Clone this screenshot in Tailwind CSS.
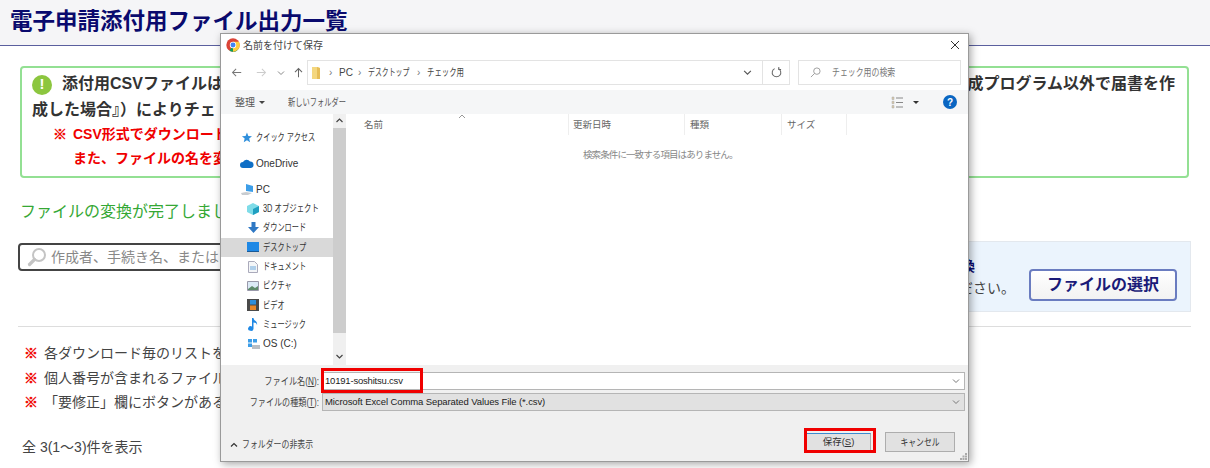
<!DOCTYPE html>
<html lang="ja">
<head>
<meta charset="UTF-8">
<title>電子申請添付用ファイル出力一覧</title>
<script src="https://cdn.jsdelivr.net/npm/@tailwindcss/browser@4"></script>
</head>
<body class="bg-white font-['Liberation_Sans','Noto_Sans_CJK_JP',sans-serif] text-[#333]">
<div class="relative h-[468px] w-[1210px] overflow-hidden">

  <!-- page behind the dialog -->
  <header class="h-[46px] border-b border-[#5a5f9e] bg-[#f5f5f7] pl-[10px] pt-[5px]">
    <h1 class="text-[22.5px] font-bold leading-[34px] text-[#0a0a6e]">電子申請添付用ファイル出力一覧</h1>
  </header>

  <main class="pl-[18px] pr-[19px]">
    <section class="mt-[20px] ml-[2px] mr-[2px] h-[112px] rounded-[4px] border-2 border-[#93e093] pl-[10px] pr-[12px] pt-[2px]">
      <div class="flex h-[27px] items-center justify-between text-[16px] font-bold">
        <div class="flex items-center">
          <span class="flex size-[20px] translate-y-[1px] items-center justify-center rounded-full bg-[#8cc63f] text-[15px] font-bold text-white">!</span>
          <span class="ml-[10px]">添付用CSVファイルは</span>
        </div>
        <span>成プログラム以外で届書を作</span>
      </div>
      <p class="h-[25px] text-[16px] font-bold leading-[25px]">成した場合』）によりチェ</p>
      <p class="ml-[21px] flex h-[24px] items-center text-[14px] font-bold text-[#f00000]"><span class="w-[20px] [-webkit-text-stroke:0.5px_#f00000]">※</span>CSV形式でダウンロード</p>
      <p class="ml-[41px] flex h-[25px] items-center text-[14px] font-bold text-[#f00000]">また、ファイルの名を変</p>
    </section>

    <p class="mt-[22px] ml-[2px] text-[16px] leading-[24px] text-[#35a835]">ファイルの変換が完了しました</p>

    <div class="mt-[19px] flex items-start justify-between">
      <div class="flex h-[28px] w-[400px] items-center rounded-[4px] border-2 border-[#444] pl-[7px]">
        <svg class="size-[20px]" viewBox="0 0 20 20" fill="none"><circle cx="12" cy="8" r="6" stroke="#c4c4c4" stroke-width="2"/><path d="M7.5 12.5 2.5 17.5" stroke="#c4c4c4" stroke-width="3.2" stroke-linecap="round"/></svg>
        <span class="ml-[4px] text-[14px] text-[#888]">作成者、手続き名、または</span>
      </div>
      <div class="flex h-[71px] w-[500px] -translate-y-[2px] items-center justify-end border border-[#e3e8ee] bg-[#ebf4fd] pr-[13px]">
        <div class="mr-[14px]">
          <p class="mb-[2px] mr-[40px] text-right text-[14px] font-bold leading-[20px] text-[#0a0a6e]">換</p>
          <p class="text-[14px] leading-[20px] text-[#444]">ください。</p>
        </div>
        <button class="mt-[16px] h-[32px] w-[148px] rounded-[4px] border-2 border-[#6a7cc0] bg-gradient-to-b from-white to-[#f2f2f2] text-[16px] font-bold text-[#1a1a78]">ファイルの選択</button>
      </div>
    </div>

    <hr class="mt-[12px] border-[#dddddd]">

    <ul class="mt-[14px] ml-[6px] text-[14px] leading-[24.5px] text-[#444]">
      <li class="flex"><span class="w-[20px] font-bold text-[#f00000] [-webkit-text-stroke:0.5px_#f00000]">※</span>各ダウンロード毎のリストを</li>
      <li class="flex"><span class="w-[20px] font-bold text-[#f00000] [-webkit-text-stroke:0.5px_#f00000]">※</span>個人番号が含まれるファイル</li>
      <li class="flex"><span class="w-[20px] font-bold text-[#f00000] [-webkit-text-stroke:0.5px_#f00000]">※</span>「要修正」欄にボタンがある</li>
    </ul>
    <p class="mt-[22px] ml-[4px] text-[14px] text-[#444]">全 3(1〜3)件を表示</p>
  </main>

  <!-- save dialog -->
  <div class="absolute left-[220px] top-[33px] flex h-[429px] w-[749px] flex-col border border-[#9a9a9a] bg-white text-[#333] shadow-[2px_2px_8px_rgba(0,0,0,0.35)]">
    <div class="flex h-[22px] shrink-0 items-center justify-between pl-[5px] pr-[6px]">
      <div class="flex items-center">
        <svg class="size-[14px]" viewBox="0 0 48 48"><circle cx="24" cy="24" r="23" fill="#db4437"/><path d="M24 24 44 36A23 23 0 0 1 12 44Z" fill="#0f9d58"/><path d="M24 13H44.5A23 23 0 0 1 24 47Z" fill="#ffcd40"/><circle cx="24" cy="24" r="11" fill="#fff"/><circle cx="24" cy="24" r="8.5" fill="#4285f4"/></svg>
        <span class="ml-[3px] text-[10px] text-[#444]">名前を付けて保存</span>
      </div>
      <svg class="mr-[2px] size-[10px]" viewBox="0 0 10 10" stroke="#333" stroke-width="1"><path d="M1 1 9 9M9 1 1 9"/></svg>
    </div>

    <div class="mt-[4px] flex h-[25px] shrink-0 items-center">
      <div class="flex w-[86px] items-center pl-[10px]">
        <svg class="size-[11px]" viewBox="0 0 14 14" fill="none" stroke="#777" stroke-width="1.3"><path d="M13 7H2M6.500 2.500 2 7l4.500 4.500"/></svg>
        <svg class="ml-[14px] size-[11px]" viewBox="0 0 14 14" fill="none" stroke="#ccc" stroke-width="1.3"><path d="M1 7h11M7.500 2.500 12 7l-4.500 4.500"/></svg>
        <svg class="ml-[10px] size-[8px]" viewBox="0 0 8 8" fill="none" stroke="#888"><path d="M1 2.500 4 5.500l3-3"/></svg>
        <svg class="ml-[8px] size-[11px]" viewBox="0 0 14 14" fill="none" stroke="#666" stroke-width="1.3"><path d="M7 13V2M2.500 6.500 7 2l4.500 4.500"/></svg>
      </div>
      <div class="flex h-[25px] w-[483px] items-center border border-[#e3e3e3] text-[10px] text-[#444]">
        <svg class="ml-[4px] h-[12px] w-[8px]" viewBox="0 0 8 12"><path d="M0 0H5L8 1V12H0Z" fill="#f4d77f"/><path d="M5 0 8 1V12H5Z" fill="#e6bd57"/></svg>
        <span class="ml-[9px] w-[3px] text-[#777]">›</span><span class="ml-[7px] w-[12px]">PC</span>
        <span class="ml-[7px] w-[3px] text-[#777]">›</span><span class="ml-[7px] w-[41px] origin-left scale-x-[.69] whitespace-nowrap">デスクトップ</span>
        <span class="ml-[8px] w-[3px] text-[#777]">›</span><span class="ml-[7px] w-[37px] origin-left scale-x-[.74] whitespace-nowrap">チェック用</span>
        <svg class="ml-auto mr-[10px] size-[9px]" viewBox="0 0 8 8" fill="none" stroke="#555"><path d="M1 2.500 4 5.500l3-3"/></svg>
        <div class="flex h-full w-[27px] items-center justify-center border-l border-[#e3e3e3]">
          <svg class="size-[11px]" viewBox="0 0 12 12" fill="none" stroke="#666" stroke-width="1.100"><path d="M8 1.800A4.700 4.700 0 1 1 4 1.800"/><path d="M8.500 0v2.600H11"/></svg>
        </div>
      </div>
      <div class="ml-[8px] flex h-[25px] w-[163px] items-center border border-[#e3e3e3] pl-[11px] text-[10px] text-[#777]">
        <svg class="size-[11px]" viewBox="0 0 12 12" fill="none" stroke="#999"><circle cx="7.500" cy="4.500" r="3.500"/><path d="M5 7 1 11"/></svg>
        <span class="ml-[11px] w-[63px] origin-left scale-x-[.79] whitespace-nowrap">チェック用の検索</span>
      </div>
    </div>

    <div class="mt-[5px] flex h-[24px] shrink-0 items-center bg-[#f5f6f7] pl-[14px] pr-[11px] text-[10px] text-[#555]">
      <span>整理</span>
      <span class="ml-[4px] border-x-[3px] border-t-[3px] border-x-transparent border-t-[#444]"></span>
      <span class="ml-[23px] w-[58px] origin-left scale-x-[.725] whitespace-nowrap">新しいフォルダー</span>
      <svg class="ml-auto size-[13px]" viewBox="0 0 13 13" stroke="#888"><path d="M5 2h7M5 6.500h7M5 11h7"/><path d="M1 1h2v2.500H1zM1 5.200h2v2.500H1zM1 9.500h2V12H1z" fill="#d9c9a8" stroke="#aaa" stroke-width=".5"/></svg>
      <span class="ml-[9px] border-x-[3px] border-t-[3px] border-x-transparent border-t-[#333]"></span>
      <span class="ml-[24px] flex size-[14px] items-center justify-center rounded-full bg-[#0a66c2] text-[10px] font-bold text-white">?</span>
    </div>

    <div class="flex h-[251px] shrink-0">
      <nav class="w-[112px] shrink-0 text-[10px] text-[#333]">
        <div class="mt-[14px] flex h-[19px] items-center pl-[20px]">
          <svg class="size-[11px]" viewBox="0 0 12 12"><path d="M6.500 .5 8 4.300l4 .2-3.100 2.600 1 4L6.500 9 3 11.100l1-4L1 4.500l4-.2Z" fill="#2f8fdc"/></svg>
          <span class="ml-[4px] w-[60px] origin-left scale-x-[.72] whitespace-nowrap">クイック アクセス</span>
        </div>
        <div class="mt-[7px] flex h-[19px] items-center pl-[19px]">
          <svg class="h-[9px] w-[14px]" viewBox="0 0 14 9"><path d="M3 9A3 3 0 0 1 3 3 4 4 0 0 1 10 2.500 3.300 3.300 0 0 1 11 9Z" fill="#0f6fc6"/></svg>
          <span class="ml-[2px]">OneDrive</span>
        </div>
        <div class="mt-[7px] flex h-[19px] items-center pl-[20px]">
          <svg class="size-[13px]" viewBox="0 0 13 13"><path d="M5 1 12 3V9L5 8Z" fill="#3d9ee8"/><path d="M0 10 5 9 11 10 7 12H1Z" fill="#c8ccd0"/></svg>
          <span class="ml-[2px]">PC</span>
        </div>
        <div class="flex h-[19.300px] items-center pl-[26px]">
          <svg class="size-[12px]" viewBox="0 0 12 12"><path d="M6 0 12 3V9L6 12 0 9V3Z" fill="#7fdce8"/><path d="M6 6 12 3V9L6 12Z" fill="#1f9fc0"/></svg>
          <span class="ml-[4px] w-[57px] origin-left scale-x-[.74] whitespace-nowrap">3D オブジェクト</span>
        </div>
        <div class="flex h-[19.300px] items-center pl-[27px]">
          <svg class="size-[11px]" viewBox="0 0 11 11"><path d="M3.500 0H7.500V5H11L5.500 11 0 5H3.500Z" fill="#2f78c4"/></svg>
          <span class="ml-[4px] w-[43px] origin-left scale-x-[.72] whitespace-nowrap">ダウンロード</span>
        </div>
        <div class="flex h-[19.300px] items-center bg-[#d9d9d9] pl-[26px]">
          <svg class="h-[10px] w-[12px]" viewBox="0 0 12 10"><path d="M0 0H12V9H0Z" fill="#1e88e5"/><path d="M0 9H12V10H0Z" fill="#1a5a96"/></svg>
          <span class="ml-[4px] w-[43px] origin-left scale-x-[.72] whitespace-nowrap">デスクトップ</span>
        </div>
        <div class="flex h-[19.300px] items-center pl-[27px]">
          <svg class="h-[12px] w-[10px]" viewBox="0 0 10 12"><path d="M.5.5H6.500L9.500 3.500V11.500H.5Z" fill="#f4f6f8" stroke="#aab"/><path d="M2 6H8M2 8H8" stroke="#6aa8dc"/></svg>
          <span class="ml-[5px] w-[43px] origin-left scale-x-[.72] whitespace-nowrap">ドキュメント</span>
        </div>
        <div class="flex h-[19.300px] items-center pl-[26px]">
          <svg class="h-[10px] w-[12px]" viewBox="0 0 12 10"><path d="M.5.5H11.500V9.500H.5Z" fill="#dbeaf6" stroke="#99a"/><path d="M1 8 5 5 8 7 11 5V9H1Z" fill="#5d8a6a"/></svg>
          <span class="ml-[4px] w-[29px] origin-left scale-x-[.72] whitespace-nowrap">ピクチャ</span>
        </div>
        <div class="flex h-[19.300px] items-center pl-[26px]">
          <svg class="h-[12px] w-[12px]" viewBox="0 0 12 12"><path d="M0 0H12V12H0Z" fill="#4a4a4a"/><path d="M3 1H9V5.500H3Z" fill="#2f8fdc"/><path d="M3 6.500H9V11H3Z" fill="#e8882a"/></svg>
          <span class="ml-[4px] w-[22px] origin-left scale-x-[.72] whitespace-nowrap">ビデオ</span>
        </div>
        <div class="flex h-[19.300px] items-center pl-[27px]">
          <svg class="h-[13px] w-[10px]" viewBox="0 0 10 13"><path d="M4 0H5.500C5.500 3 10 3 9 7 8.500 5 7 4.500 5.500 4.500V10.500A2.700 2.300 0 1 1 4 8.500Z" fill="#1e88e5"/></svg>
          <span class="ml-[5px] w-[43px] origin-left scale-x-[.72] whitespace-nowrap">ミュージック</span>
        </div>
        <div class="flex h-[19.300px] items-center pl-[26px]">
          <svg class="size-[13px]" viewBox="0 0 13 13"><path d="M1 2H5V5.500H1ZM6 2H10V5.500H6ZM1 6.500H5V10H1Z" fill="#3d9ee8"/><path d="M5 8H13V12H5Z" fill="#b9bec4"/></svg>
          <span class="ml-[3px]">OS (C:)</span>
        </div>
      </nav>

      <div class="flex w-[13px] shrink-0 flex-col bg-[#f0f0f0]">
        <svg class="h-[14px] w-[13px]" viewBox="0 0 13 14" fill="none" stroke="#444" stroke-width="1.200"><path d="M3.500 8 6.500 5l3 3"/></svg>
        <div class="h-[205px] bg-[#cdcdcd]"></div>
        <svg class="mt-auto mb-[2px] h-[14px] w-[13px]" viewBox="0 0 13 14" fill="none" stroke="#444" stroke-width="1.200"><path d="M3.500 6 6.500 9l3-3"/></svg>
      </div>

      <div class="min-w-0 flex-1">
        <div class="relative flex h-[21px] text-[9.500px] text-[#666]">
          <svg class="absolute left-[112px] top-0 h-[5px] w-[8px]" viewBox="0 0 8 5" fill="none" stroke="#999"><path d="M1 4 4 1l3 3"/></svg>
          <div class="flex w-[223px] items-center border-r border-[#eeeeee] pl-[18px] pt-[2px]">名前</div>
          <div class="flex w-[116px] items-center border-r border-[#eeeeee] pl-[4px] pt-[2px]">更新日時</div>
          <div class="flex w-[97px] items-center border-r border-[#eeeeee] pl-[5px] pt-[2px]">種類</div>
          <div class="flex w-[65px] items-center border-r border-[#eeeeee] pl-[5px] pt-[2px]">サイズ</div>
        </div>
        <p class="mt-[13px] pl-[237px] text-[9.500px] tracking-[-0.9px] text-[#888]">検索条件に一致する項目はありません。</p>
      </div>
    </div>

    <div class="relative flex-1 bg-[#f0f0f0] text-[10px] text-[#444]">
      <div class="mt-[7px] flex h-[18px] items-center">
        <label class="w-[98px] origin-right scale-x-[.82] whitespace-nowrap text-right">ファイル名(<u>N</u>):</label>
        <div class="ml-[3px] flex h-[18px] w-[643px] items-center justify-between border border-[#b5b5b5] bg-white pl-[2px] pr-[4px] text-[9.500px] tracking-[-0.2px] text-[#222]">10191-soshitsu.csv
          <svg class="size-[8px]" viewBox="0 0 8 8" fill="none" stroke="#777"><path d="M1 2.500 4 5.500l3-3"/></svg>
        </div>
      </div>
      <div class="mt-[3px] flex h-[18px] items-center">
        <label class="w-[98px] origin-right scale-x-[.81] whitespace-nowrap text-right">ファイルの種類(<u>T</u>):</label>
        <div class="ml-[3px] flex h-[18px] w-[643px] items-center justify-between border border-[#b5b5b5] bg-[#e1e1e1] pl-[2px] pr-[4px] text-[9.500px] tracking-[-0.1px] text-[#222]">Microsoft Excel Comma Separated Values File (*.csv)
          <svg class="size-[8px]" viewBox="0 0 8 8" fill="none" stroke="#777"><path d="M1 2.500 4 5.500l3-3"/></svg>
        </div>
      </div>
      <div class="mt-[21px] flex items-center pl-[9px] pr-[13px]">
        <svg class="mt-[5px] size-[8px]" viewBox="0 0 8 8" fill="none" stroke="#333" stroke-width="1.200"><path d="M1 5.500 4 2.500l3 3"/></svg>
        <span class="ml-[4px] mt-[5px] w-[71px] origin-left scale-x-[.79] whitespace-nowrap">フォルダーの非表示</span>
        <button class="ml-auto h-[19px] w-[65px] border border-[#adadad] border-t-[#3b8bd0] bg-[#e1e1e1] text-[9.500px] text-[#333]">保存(<u>S</u>)</button>
        <button class="ml-[14px] h-[20px] w-[70px] border border-[#adadad] bg-[#e1e1e1] text-[#333]"><span class="inline-block scale-x-[.78]">キャンセル</span></button>
      </div>
      <svg class="absolute bottom-[1px] right-[1px] size-[7px]" viewBox="0 0 7 7" fill="#aaa"><path d="M5 0h2v2H5zM2.500 2.500h2v2h-2zM5 2.500h2v2H5zM0 5h2v2H0zM2.500 5h2v2h-2zM5 5h2v2H5z"/></svg>
    </div>
  </div>

  <!-- red callouts on top of the screenshot -->
  <div class="absolute left-[321px] top-[368px] h-[25px] w-[102px] border-[3px] border-[#f00000]"></div>
  <div class="absolute left-[804px] top-[428px] h-[25px] w-[72px] border-[3px] border-[#f00000]"></div>
</div>
</body>
</html>
